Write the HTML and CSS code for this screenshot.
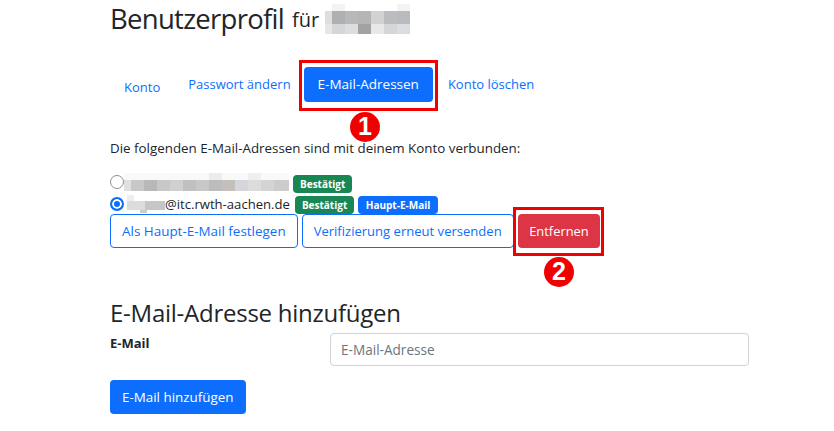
FILE: index.html
```html
<!DOCTYPE html>
<html lang="de">
<head>
<meta charset="utf-8">
<title>Benutzerprofil</title>
<link rel="stylesheet" href="styles.css">
</head>
<body>
<main class="page">
  <h2 class="title">Benutzerprofil <small class="title-for">für</small>
    <svg class="mosaic-name" width="85" height="30" viewBox="0 0 85 30">
      <rect x="7" y="0" width="13" height="7" fill="#f2f3f3"/><rect x="72" y="0" width="13" height="7" fill="#f2f3f3"/>
      <rect x="0" y="7" width="7" height="13" fill="#e0dedc"/><rect x="7" y="7" width="13" height="13" fill="#aeb0b3"/><rect x="20" y="7" width="13" height="13" fill="#b8b8b8"/><rect x="33" y="7" width="13" height="13" fill="#b5b5b5"/><rect x="46" y="7" width="13" height="13" fill="#d2d2d2"/><rect x="59" y="7" width="13" height="13" fill="#bbbcbf"/><rect x="72" y="7" width="13" height="13" fill="#b8babd"/>
      <rect x="0" y="20" width="7" height="10" fill="#e8e6e4"/><rect x="7" y="20" width="13" height="10" fill="#d5d6d8"/><rect x="20" y="20" width="13" height="10" fill="#dcdde0"/><rect x="33" y="20" width="13" height="10" fill="#a2a2a2"/><rect x="46" y="20" width="13" height="10" fill="#e8e8e6"/><rect x="59" y="20" width="13" height="10" fill="#d5d6d8"/><rect x="72" y="20" width="13" height="10" fill="#dcdddf"/>
    </svg>
  </h2>
  <nav class="tabs">
    <a class="tab tab-low">Konto</a>
    <a class="tab">Passwort ändern</a>
    <a class="tab tab-active">E-Mail-Adressen</a>
    <a class="tab">Konto löschen</a>
  </nav>
  <p class="intro">Die folgenden E-Mail-Adressen sind mit deinem Konto verbunden:</p>
  <div class="mail-row">
    <span class="radio"></span>
    <svg class="mosaic-mail" width="165" height="18" viewBox="0 0 165 18">
      <rect x="0" y="0" width="165" height="7" fill="#f9f9f9"/><rect x="85" y="0" width="13" height="7" fill="#ececec"/><rect x="124" y="0" width="13" height="7" fill="#efefef"/>
      <rect x="0" y="7" width="7" height="11" fill="#e0e0e0"/><rect x="7" y="7" width="13" height="11" fill="#c8c8c8"/><rect x="20" y="7" width="13" height="11" fill="#b8b8b8"/><rect x="33" y="7" width="13" height="11" fill="#c8c8c8"/><rect x="46" y="7" width="13" height="11" fill="#d0d0d0"/><rect x="59" y="7" width="13" height="11" fill="#c0c0c0"/><rect x="72" y="7" width="13" height="11" fill="#c8c8c8"/><rect x="85" y="7" width="13" height="11" fill="#bcbcbc"/><rect x="98" y="7" width="13" height="11" fill="#c4bfbb"/><rect x="111" y="7" width="13" height="11" fill="#d4d6db"/><rect x="124" y="7" width="13" height="11" fill="#dcdcdc"/><rect x="137" y="7" width="13" height="11" fill="#d4d4d4"/><rect x="150" y="7" width="15" height="11" fill="#cccccc"/>
    </svg>
    <span class="badge badge-green">Bestätigt</span>
  </div>
  <div class="mail-row">
    <span class="radio radio-on"></span>
    <span class="addr"><svg class="mosaic-user" width="38" height="18" viewBox="0 0 38 18">
      <rect x="0" y="0" width="7" height="6" fill="#eeeeee"/>
      <rect x="0" y="6" width="18" height="9" fill="#dcdcdc"/><rect x="18" y="6" width="20" height="9" fill="#c6c6c6"/>
      <rect x="13" y="15" width="7" height="3" fill="#cccccc"/>
    </svg>@itc.rwth-aachen.de</span>
    <span class="badge badge-green">Bestätigt</span>
    <span class="badge badge-blue">Haupt-E-Mail</span>
  </div>
  <div class="actions">
    <button class="btn btn-outline btn-wide">Als Haupt-E-Mail festlegen</button>
    <button class="btn btn-outline btn-verify">Verifizierung erneut versenden</button>
    <button class="btn btn-danger">Entfernen</button>
  </div>
  <h3 class="subtitle">E-Mail-Adresse hinzufügen</h3>
  <div class="form-row">
    <label class="label">E-Mail</label>
    <input class="input" placeholder="E-Mail-Adresse">
  </div>
  <button class="btn btn-primary">E-Mail hinzufügen</button>
</main>
<div class="mark-box mark-box-1"></div>
<div class="mark-box mark-box-2"></div>
<div class="mark-num mark-num-1">1</div>
<div class="mark-num mark-num-2">2</div>
</body>
</html>
```
FILE: styles.css
```css
* { box-sizing: border-box; }
html, body { margin: 0; height: 431px; overflow: hidden; background: #fff; }
body { position: relative; font-family: "Open Sans", "Noto Sans", sans-serif; color: #212529; font-size: 13px; }
.page { padding: 0 85px 0 110px; }
.title { margin: 0; height: 67px; font-size: 27.5px; font-weight: 400; line-height: 38px; display: flex; align-items: flex-start; letter-spacing: -0.72px; }
.title-for { font-size: 20px; margin: 1px 6px 0 8px; letter-spacing: 0; }
.mosaic-name { margin-top: 4px; }
.tabs { display: flex; height: 35px; align-items: stretch; font-size: 13px; }
.tab { color: #0d6efd; padding: 0 14px; line-height: 35px; border-radius: 4px; white-space: nowrap; }
.tab-low { line-height: 40px; }
.tab-active { background: #0d6efd; color: #fff; font-size: 13.5px; margin: 0 1px 0 -1px; }
.intro { margin: 37px 0 0; height: 18px; line-height: 18px; font-size: 13.37px; }
.mail-row { display: flex; align-items: flex-start; height: 18px; margin-top: 18px; }
.mail-row + .mail-row { margin-top: 3px; }
.radio { width: 14px; height: 14px; border: 1px solid #8f8f8f; border-radius: 50%; flex: none; background: #fff; }
.radio-on { margin-top: 1px; border: 2px solid #0d6efd; box-shadow: inset 0 0 0 2px #fff; background: #0d6efd; }
.mosaic-mail { margin: -2px 4px 0 0; }
.mosaic-user { margin: 0; }
.addr { display: inline-flex; align-items: center; margin: -1px 5px 0 3px; font-size: 13.1px; line-height: 18px; }
.badge { font-size: 10px; font-weight: 700; color: #fff; border-radius: 4px; padding: 0 7px; height: 18px; line-height: 18px; margin-right: 4px; white-space: nowrap; }
.badge-green { background: #198754; }
.badge-blue { background: #0d6efd; padding: 0 7.5px; }
.actions { display: flex; gap: 4px; }
.btn { font: inherit; font-size: 13px; height: 34px; border-radius: 4px; padding: 0 11px; border: 1px solid transparent; cursor: pointer; white-space: nowrap; }
.btn-outline { background: #fff; border-color: #0d6efd; color: #0d6efd; }
.btn-wide { font-size: 13.45px; }
.btn-verify { font-size: 13.05px; }
.btn-danger { background: #dc3545; color: #fff; font-size: 12.9px; padding: 0 10.5px; }
.btn-primary { background: #0d6efd; color: #fff; display: block; font-size: 13.4px; }
.subtitle { margin: 50px 0 0; font-size: 24px; font-weight: 400; line-height: 30px; letter-spacing: -0.25px; }
.form-row { display: flex; margin-top: 5px; height: 47px; }
.label { width: 220px; font-weight: 700; font-size: 13px; line-height: 21px; }
.input { flex: 1; height: 33px; border: 1px solid #ced4da; border-radius: 4px; padding: 0 10px; font: inherit; font-size: 13.6px; }
.input::placeholder { color: #6c757d; opacity: 1; }
.mark-box { position: absolute; border: 3px solid #f00000; }
.mark-box-1 { left: 299px; top: 60px; width: 139px; height: 51px; }
.mark-box-2 { left: 513px; top: 207px; width: 91px; height: 49px; }
.mark-num { position: absolute; width: 30px; height: 30px; padding-top: 2px; border-radius: 50%; background: #f00000; color: #fff; font: 700 25px/25px "Liberation Sans", sans-serif; text-align: center; }
.mark-num-1 { left: 350px; top: 112px; }
.mark-num-2 { left: 544px; top: 257px; }
```
